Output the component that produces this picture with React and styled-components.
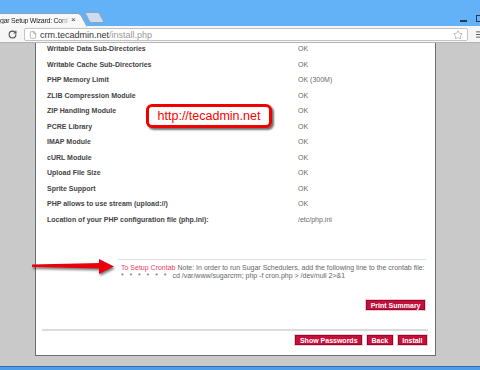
import React from 'react'
import styled, { createGlobalStyle } from 'styled-components'
import { RotateCw, File, Star, Menu } from 'lucide-react'

const GlobalStyle = createGlobalStyle`
  html, body { margin: 0; padding: 0; }
  body {
    width: 480px;
    height: 370px;
    overflow: hidden;
    font-family: "Liberation Sans", Arial, sans-serif;
  }
`

const checks = [
  ['Writable Data Sub-Directories', 'OK'],
  ['Writable Cache Sub-Directories', 'OK'],
  ['PHP Memory Limit', 'OK (300M)'],
  ['ZLIB Compression Module', 'OK'],
  ['ZIP Handling Module', 'OK'],
  ['PCRE Library', 'OK'],
  ['IMAP Module', 'OK'],
  ['cURL Module', 'OK'],
  ['Upload File Size', 'OK'],
  ['Sprite Support', 'OK'],
  ['PHP allows to use stream (upload://)', 'OK'],
  ['Location of your PHP configuration file (php.ini):', '/etc/php.ini'],
]

const Window = styled.div`
  position: relative;
  width: 480px;
  height: 370px;
  display: flex;
  flex-direction: column;
  overflow: hidden;
  background: #63b1f6;
`

const TitleBar = styled.div`
  height: 26px;
  flex: none;
  display: flex;
  align-items: flex-end;
  background: #63b1f6;
`

const Tab = styled.div`
  position: relative;
  width: 96px;
  height: 13px;
  margin-left: -18px;
  padding-left: 10px;
  box-sizing: border-box;
  display: flex;
  align-items: center;
  background: #f8f8f8;
  border-top: 1px solid #86a0ba;

  &::after {
    content: '';
    position: absolute;
    right: -6px;
    top: -1px;
    width: 12px;
    height: 13px;
    background: #f8f8f8;
    border-top: 1px solid #86a0ba;
    border-right: 1px solid #86a0ba;
    border-radius: 0 3px 0 0;
    transform: skewX(28deg);
  }
`

const TabTitle = styled.span`
  width: 77px;
  overflow: hidden;
  white-space: nowrap;
  text-overflow: clip;
  font-size: 7px;
  letter-spacing: -0.25px;
  color: #222;
  -webkit-mask-image: linear-gradient(to right, #000 88%, transparent);
`

const TabClose = styled.span`
  position: relative;
  z-index: 1;
  margin-left: 2px;
  font-size: 8px;
  color: #333;
  line-height: 1;
`

const NewTab = styled.div`
  width: 13px;
  height: 9px;
  margin: 0 0 3px 9px;
  background: #cddcee;
  border: 1px solid #8aa5c2;
  border-radius: 2px;
  transform: skewX(28deg);
`

const Controls = styled.div`
  align-self: flex-start;
  margin: 15px -4px 0 auto;
  display: flex;
  align-items: center;
  gap: 9px;
`

const Minimize = styled.div`
  width: 7px;
  height: 2px;
  margin-top: 4px;
  background: #2b3a4a;
`

const Maximize = styled.div`
  width: 6px;
  height: 5px;
  border: 1px solid #2b3a4a;
`

const Toolbar = styled.div`
  height: 16px;
  flex: none;
  display: flex;
  align-items: center;
  gap: 7px;
  padding-left: 8px;
  background: #f6f6f6;
  border-bottom: 1px solid #b4b4b4;
`

const Omnibox = styled.div`
  flex: 1;
  height: 13px;
  margin-top: 1px;
  box-sizing: border-box;
  display: flex;
  align-items: center;
  gap: 3px;
  padding: 0 4px;
  background: #fff;
  border: 1px solid #c4c4c4;
  border-radius: 2px;
`

const Url = styled.span`
  flex: 1;
  font-size: 9px;
  color: #333;
  white-space: nowrap;

  span { color: #999; }
`

const Viewport = styled.div`
  flex: 1;
  display: flex;
  padding: 0 44px 10px 35px;
  background: #c9c9c9;
`

const Panel = styled.div`
  flex: 1;
  display: flex;
  flex-direction: column;
  background: #fff;
  border: 1px solid #6d6d6d;
  border-top: none;
  overflow: hidden;
`

const CheckList = styled.div`
  margin-top: -2px;
  padding-left: 11px;
`

const CheckRow = styled.div`
  display: grid;
  grid-template-columns: 251px 1fr;
  height: 15.5px;
  line-height: 15.5px;
  font-size: 7px;
  white-space: nowrap;
`

const Label = styled.span`
  font-weight: bold;
  color: #444;
`

const Value = styled.span`
  color: #6a6a6a;
`

const Note = styled.div`
  margin: 32px 9px 0 82px;
  padding: 4px 0 0 3px;
  border-top: 1px solid #dedede;
  font-size: 7px;
  line-height: 8px;
  color: #666;
  white-space: nowrap;
`

const Crontab = styled.span`
  color: #f0405a;
`

const CronLine = styled.div`
  display: flex;
  align-items: center;
`

const Stars = styled.span`
  display: flex;
  gap: 5.8px;
  margin-right: 6px;
`

const ButtonRow = styled.div`
  display: flex;
  justify-content: flex-end;
  gap: 5px;
  margin-top: ${p => p.$top}px;
  padding-right: ${p => p.$right}px;
`

const Button = styled.button`
  height: 10px;
  padding: 0 3.5px;
  display: flex;
  align-items: center;
  font-family: "Liberation Sans", Arial, sans-serif;
  font-size: 7px;
  font-weight: bold;
  color: #fff;
  background: #c60f3a;
  border: 1px solid #8e0b2a;
  box-shadow: 0 0 0 1px #f1c9d2;
  border-radius: 0;
`

const Divider = styled.div`
  height: 2px;
  margin: 19px 7px 0 6px;
  background: #dcdcdc;
`

const Taskbar = styled.div`
  height: 4px;
  flex: none;
  background: #4e9de6;
  border-top: 1px solid #2c6db5;
  box-sizing: border-box;
`

const Callout = styled.div`
  position: absolute;
  left: 146px;
  top: 104px;
  width: 126px;
  height: 24px;
  box-sizing: border-box;
  display: flex;
  align-items: center;
  justify-content: center;
  background: #fff;
  border: 3px solid #f20000;
  border-radius: 6px;
  box-shadow: 2px 2px 2px rgba(0, 0, 0, 0.55);
  font-size: 12.5px;
  color: #f00;
`

const Arrow = styled.svg`
  position: absolute;
  left: 28px;
  top: 256px;
  filter: drop-shadow(1px 2px 1px rgba(0, 0, 0, 0.5));
`

export default function App() {
  return (
    <>
      <GlobalStyle />
      <Window>
        <TitleBar>
          <Tab>
            <TabTitle>Sugar Setup Wizard: Confirm Settings</TabTitle>
            <TabClose>×</TabClose>
          </Tab>
          <NewTab />
          <Controls>
            <Minimize />
            <Maximize />
          </Controls>
        </TitleBar>
        <Toolbar>
          <RotateCw size={9} strokeWidth={3} color="#555" />
          <Omnibox>
            <File size={8} strokeWidth={1.5} color="#777" />
            <Url>crm.tecadmin.net<span>/install.php</span></Url>
            <Star size={10} strokeWidth={1.5} color="#999" />
          </Omnibox>
          <Menu size={9} strokeWidth={2.5} color="#555" style={{ marginRight: -4 }} />
        </Toolbar>
        <Viewport>
          <Panel>
            <CheckList>
              {checks.map(([label, value]) => (
                <CheckRow key={label}>
                  <Label>{label}</Label>
                  <Value>{value}</Value>
                </CheckRow>
              ))}
            </CheckList>
            <Note>
              <div>
                <Crontab>To Setup Crontab</Crontab> Note: In order to run Sugar Schedulers, add the following line to the crontab file:
              </div>
              <CronLine>
                <Stars>
                  <span>*</span><span>*</span><span>*</span><span>*</span><span>*</span><span>*</span>
                </Stars>
                cd /var/www/sugarcrm; php -f cron.php &gt; /dev/null 2&gt;&amp;1
              </CronLine>
            </Note>
            <ButtonRow $top={20} $right={10}>
              <Button>Print Summary</Button>
            </ButtonRow>
            <Divider />
            <ButtonRow $top={4} $right={8}>
              <Button>Show Passwords</Button>
              <Button>Back</Button>
              <Button>Install</Button>
            </ButtonRow>
          </Panel>
        </Viewport>
        <Taskbar />
        <Callout>http://tecadmin.net</Callout>
        <Arrow width="92" height="22" viewBox="0 0 92 22">
          <polygon points="4,8.5 73,7 73,12.5 4,11" fill="#e8000a" />
          <polygon points="71,3 86,10.5 71,18" fill="#e8000a" />
        </Arrow>
      </Window>
    </>
  )
}
